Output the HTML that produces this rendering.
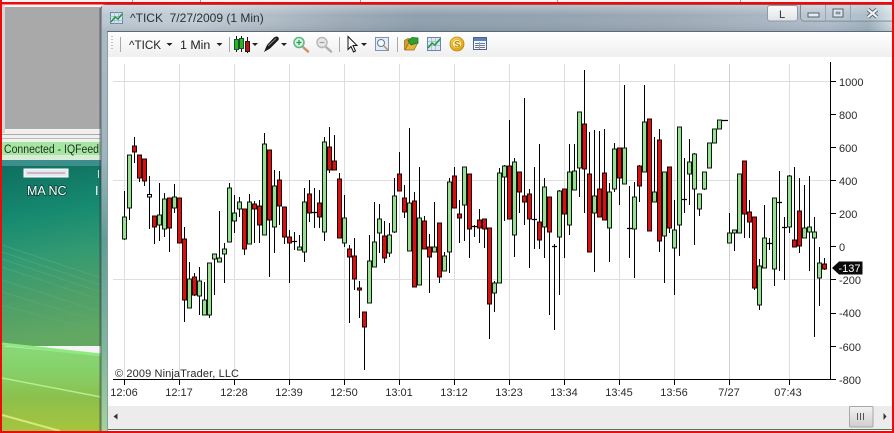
<!DOCTYPE html>
<html><head><meta charset="utf-8"><title>^TICK</title>
<style>
html,body{margin:0;padding:0;background:#fff;width:894px;height:433px;overflow:hidden}
svg{display:block;font-family:"Liberation Sans",Arial,sans-serif}
</style></head><body>
<svg width="894" height="433" viewBox="0 0 894 433" xmlns="http://www.w3.org/2000/svg">
<defs>
<linearGradient id="desk" x1="0" y1="0" x2="0.1" y2="1">
<stop offset="0" stop-color="#0f6e60"/><stop offset=".3" stop-color="#168a70"/><stop offset=".55" stop-color="#349a72"/><stop offset=".75" stop-color="#4c9e68"/><stop offset="1" stop-color="#62a862"/></linearGradient>
<linearGradient id="desk2" x1="0" y1="0" x2="0" y2="1">
<stop offset="0" stop-color="#88d878"/><stop offset=".3" stop-color="#86d068"/><stop offset=".6" stop-color="#8cc04c"/><stop offset="1" stop-color="#a8c43c"/></linearGradient>
<linearGradient id="title" x1="0" y1="0" x2="1" y2="0">
<stop offset="0" stop-color="#bcc8d1"/><stop offset=".12" stop-color="#c2cdd5"/><stop offset=".3" stop-color="#9eacb8"/><stop offset=".4" stop-color="#8f9fad"/><stop offset=".6" stop-color="#95a4b1"/><stop offset=".72" stop-color="#9daab6"/><stop offset=".92" stop-color="#b0becb"/><stop offset=".97" stop-color="#9fb2bf"/><stop offset="1" stop-color="#d0dde4"/></linearGradient>
<linearGradient id="tshade" x1="0" y1="0" x2="0" y2="1">
<stop offset="0" stop-color="#fff" stop-opacity=".32"/><stop offset=".4" stop-color="#fff" stop-opacity="0"/><stop offset="1" stop-color="#556" stop-opacity=".14"/></linearGradient>
<linearGradient id="tool" x1="0" y1="0" x2="0" y2="1">
<stop offset="0" stop-color="#ffffff"/><stop offset="1" stop-color="#efefef"/></linearGradient>
<linearGradient id="side" x1="0" y1="0" x2="0" y2="1">
<stop offset="0" stop-color="#aebbc5"/><stop offset=".35" stop-color="#a0b6be"/><stop offset=".55" stop-color="#5f9f95"/><stop offset=".8" stop-color="#7fb89a"/><stop offset="1" stop-color="#a4d49a"/></linearGradient>
<linearGradient id="thumb" x1="0" y1="0" x2="0" y2="1">
<stop offset="0" stop-color="#f2f2f2"/><stop offset="1" stop-color="#cfcfcf"/></linearGradient>
<linearGradient id="btn" x1="0" y1="0" x2="0" y2="1">
<stop offset="0" stop-color="#fbfbfb"/><stop offset="1" stop-color="#e0e4e8"/></linearGradient>
<radialGradient id="coin" cx=".4" cy=".35" r=".7"><stop offset="0" stop-color="#ffe27a"/><stop offset="1" stop-color="#dc9c08"/></radialGradient>
</defs>

<!-- background / left app -->
<rect width="894" height="433" fill="#f4f4f4"/>
<rect x="2" y="130" width="100" height="12" fill="#f0f0ee"/>
<rect x="5" y="7" width="97" height="122" fill="#a9a9a9"/>
<rect x="2" y="5" width="3" height="128" fill="#d8d8d8"/>
<rect x="2" y="134" width="100" height="1" fill="#aaa"/>
<rect x="2" y="138" width="100" height="1" fill="#bbb"/>
<rect x="2" y="142" width="100" height="13" fill="#a6e6a2"/>
<rect x="2" y="155" width="100" height="5" fill="#d8ecd6"/>
<rect x="2" y="160" width="100" height="6" fill="#3c8f8c"/>
<rect x="2" y="166" width="100" height="180" fill="url(#desk)"/>
<path d="M2 346L101 356V433H2Z" fill="url(#desk2)"/>
<g fill="none">
<path d="M2 344L101 355" stroke-width="3" stroke="#8eea80"/>
<path d="M2 378L101 397" stroke-width="1.500" stroke="#b4ec90"/>
<path d="M2 415L60 431" stroke-width="2" stroke="#d4e87c"/>
</g>
<g stroke="#58ae8c" stroke-opacity=".5" fill="none">
<path d="M2 245L101 278M2 252L101 285M2 259L101 292M2 267L101 300M2 280L101 312M2 292L101 322M2 305L101 332"/>
</g>
<text x="4" y="153" font-size="11.500" fill="#223322" textLength="95" lengthAdjust="spacingAndGlyphs">Connected - IQFeed</text>
<rect x="24" y="169" width="44" height="8" fill="#e8e8ec" stroke="#fff"/>
<rect x="27" y="172" width="38" height="2" fill="#c8b8c8"/>
<text x="27" y="195" font-size="12.500" fill="#000" fill-opacity=".5" stroke="#000" stroke-opacity=".35" stroke-width="2">MA NC</text>
<text x="27" y="195" font-size="12.500" fill="#fff">MA NC</text>
<text x="95" y="195" font-size="12.500" fill="#fff">I</text>
<rect x="98" y="170" width="1" height="8" fill="#ddd"/>

<!-- window frame -->
<rect x="99" y="8" width="2" height="425" fill="#223" fill-opacity=".25"/>
<path d="M101 433V10Q101 5 106 5H892V433Z" fill="url(#side)"/>
<path d="M101 433V10Q101 5 106 5H892" fill="none" stroke="#445" stroke-opacity=".7"/>
<rect x="102" y="5" width="790" height="26" fill="url(#title)"/>
<rect x="102" y="5" width="790" height="26" fill="url(#tshade)"/>
<rect x="107" y="31" width="785" height="1" fill="#5a6a76"/>
<rect x="107" y="32" width="785" height="399" fill="#fff"/>
<rect x="107" y="32" width="785" height="25" fill="url(#tool)"/>
<rect x="107" y="32" width="1" height="399" fill="#8a9ca4"/>

<!-- title icon -->
<g>
<rect x="110.500" y="12.500" width="12" height="11" fill="#d8e4f0" stroke="#6a86a8"/>
<path d="M114.500 12v12M118.500 12v12M110 16.500h13M110 20.500h13" stroke="#9fb4c8" stroke-width=".7"/>
<path d="M111 22L115 17L118 19L122 14" stroke="#1e9a3c" stroke-width="1.500" fill="none"/>
</g>
<text x="130" y="22" font-size="12" fill="#2a3038" xml:space="preserve">^TICK  7/27/2009 (1 Min)</text>

<!-- caption buttons -->
<rect x="767.500" y="5.500" width="30" height="15.500" rx="2.500" fill="url(#btn)" stroke="#8f9aa2"/>
<text x="779" y="18" font-size="11" fill="#333">L</text>
<path d="M800.500 5V17Q800.500 21 804 21H892" fill="none" stroke="#75858f"/>
<path d="M825.500 5V21M850.500 5V21" stroke="#8a99a3"/>
<rect x="800.500" y="5" width="91" height="16" fill="#fff" fill-opacity=".14"/>
<rect x="808" y="13" width="11" height="4" fill="#e8ecef" stroke="#55626c"/>
<rect x="833" y="9" width="10" height="8" fill="#dfe5ea" stroke="#55626c"/>
<rect x="836" y="12" width="4" height="2" fill="#9fadb9" stroke="#55626c" stroke-width=".5"/>
<path d="M868 9.500L877 17M877 9.500L868 17" stroke="#4e5b66" stroke-width="4"/>
<path d="M868 9.500L877 17M877 9.500L868 17" stroke="#eef1f3" stroke-width="2.200"/>

<!-- toolbar -->
<path d="M112 36v1M112 39v1M112 42v1M112 45v1M112 48v1" stroke="#a0a0a0" stroke-width="1.200"/>
<path d="M120.500 37V52M229.500 37V52M339.500 37V52M397.500 37V52" stroke="#a8a8a8"/>
<g font-size="12.400" fill="#222"><text x="129" y="49" textLength="32" lengthAdjust="spacingAndGlyphs">^TICK</text><text x="180" y="49">1 Min</text></g>
<g fill="#222"><path d="M166.500 43h6l-3 3zM216.500 43h6l-3 3zM252 43h6l-3 3zM281 43h6l-3 3zM361 43h6l-3 3z"/></g>
<!-- candle icon -->
<path d="M236.500 36V52M241.500 36V52M247.500 37V53" stroke="#111"/>
<rect x="234.500" y="39.500" width="4" height="10" fill="#33b020" stroke="#153"/>
<rect x="239.500" y="38.500" width="4" height="10" fill="#33b020" stroke="#153"/>
<rect x="245.500" y="41.500" width="4" height="10" fill="#b01818" stroke="#311"/>
<!-- pen icon -->
<path d="M264 52L267 45L274 37.500Q277 35.500 278.500 37.500Q279.500 39.500 277.500 41L270 48.500Z" fill="#1a1a1a"/>
<path d="M268 46L276 38.500" stroke="#aaa" stroke-width=".8"/>
<!-- zoom in -->
<path d="M303.500 47.500L308 51.500" stroke="#d4905c" stroke-width="2.500" stroke-linecap="round"/>
<circle cx="299" cy="42.500" r="5" fill="#d8f4e0" stroke="#58b888" stroke-width="1.500"/>
<path d="M296.500 42.500h5M299 40v5" stroke="#2a9a40" stroke-width="1.200"/>
<!-- zoom out -->
<path d="M326.500 47.500L331 51.500" stroke="#b0b0b0" stroke-width="2.500" stroke-linecap="round"/>
<circle cx="322" cy="42.500" r="5" fill="#e8e8e8" stroke="#b8b8b8" stroke-width="1.500"/>
<path d="M319.500 42.500h5" stroke="#a0a0a0" stroke-width="1.200"/>
<!-- cursor -->
<path d="M348 36.500V49.500L351 46.500L353.500 52L355.500 51L353 45.500H357Z" fill="#fff" stroke="#111"/>
<!-- zoom-box icon -->
<rect x="375.500" y="37.500" width="13" height="13" fill="#e4ecf6" stroke="#7e94b4"/>
<circle cx="381" cy="43" r="3.500" fill="#f6f8fb" stroke="#607a98"/>
<path d="M384 46L388 50" stroke="#d08850" stroke-width="1.500"/>
<!-- folder icon -->
<path d="M404.500 49.500V40.500L408 38.500L412 39.500V47Z" fill="#d69a28" stroke="#90681a" stroke-width=".7"/>
<path d="M405 50L409 42.500H418L414 50Z" fill="#e8b440" stroke="#90681a" stroke-width=".7"/>
<path d="M408 40.500L412 37.500L418 38V43L411 45Z" fill="#2fa030" stroke="#1c7020" stroke-width=".7"/>
<!-- chart icon -->
<rect x="427.500" y="37.500" width="13" height="13" fill="#dfe8f2" stroke="#6a86a8"/>
<path d="M431.500 38v12M435.500 38v12M428 41.500h12M428 45.500h12" stroke="#9fb4c8" stroke-width=".7"/>
<path d="M428 48L432 43L435 45L440 39" stroke="#1e9a3c" stroke-width="1.500" fill="none"/>
<!-- coin icon -->
<circle cx="457" cy="44" r="7" fill="url(#coin)" stroke="#c08a08" stroke-width=".8"/>
<circle cx="457" cy="44" r="4.500" fill="#fff2b0" stroke="#d49a10" stroke-width=".6"/>
<text x="454.200" y="47.500" font-size="9" font-weight="bold" fill="#c08000">S</text>
<!-- table icon -->
<rect x="473.500" y="37.500" width="13" height="12" fill="#f4f6fa" stroke="#50648a"/>
<rect x="474" y="38" width="12" height="3" fill="#5a80c0"/>
<path d="M475 43.500h10M475 45.500h10M475 47.500h10" stroke="#6a7890"/><path d="M479.500 42v7" stroke="#9aa"/>

<!-- grid -->
<g stroke="#dedede" fill="none">
<path d="M113 81.500H830M113 180.500H830M113 279.500H830"/>
<path d="M124.500 64V379M179.500 64V379M234.500 64V379M289.500 64V379M344.500 64V379M399.500 64V379M454.500 64V379M509.500 64V379M564.500 64V379M619.500 64V379M674.500 64V379M789.500 64V379"/>
<path d="M729.500 64V379" stroke="#cfcfcf"/>
</g>

<!-- wicks -->
<path stroke="#000" fill="none" stroke-width="1" d="M124.500 191V240M129.500 155V220M134.500 137V163M139.500 155V182M144.500 159V186M149.500 176V229M154.500 216V244M159.500 183V241M164.500 193V237M169.500 198V252M174.500 184V213M179.500 198V243M184.500 227V322M189.500 262V308M194.500 273V296M199.500 267V315M204.500 282V315M209.500 263V318M214.500 254V295M219.500 211V262M224.500 243V283M229.500 183V242M234.500 195V233M239.500 197V217M244.500 209V255M249.500 194V244M254.500 201V243M259.500 200V243M264.500 133V235M269.500 150V277M274.500 170V253M279.500 171V225M284.500 207V244M289.500 230V283M294.500 232V250M299.500 235V250M304.500 188V262M309.500 180V222M314.500 188V228M319.500 190V228M324.500 137V241M329.500 127V173M334.500 135V170M339.500 173V238M344.500 195V247M349.500 245V323M354.500 238V290M359.500 281V318M364.500 312V370M369.500 235V303M374.500 202V267M379.500 204V253M384.500 221V263M389.500 223V257M394.500 178V233M399.500 152V191M404.500 185V218M409.500 128V251M414.500 192V287M419.500 167V285M424.500 216V249M429.500 234V293M434.500 202V252M439.500 223V283M444.500 252V271M449.500 178V273M454.500 167V208M459.500 200V243M464.500 167V241M469.500 174V258M474.500 225V237M479.500 209V243M484.500 219V248M489.500 228V339M494.500 281V312M499.500 168V283M504.500 165V221M509.500 120V219M514.500 158V257M519.500 172V213M524.500 98V225M529.500 189V268M534.500 167V249M539.500 144V249M544.500 178V258M549.500 197V315M554.500 244V330M559.500 190V295M564.500 189V258M569.500 144V235M574.500 144V190M579.500 112V197M584.500 70V213M589.500 132V252M594.500 130V272M599.500 131V217M604.500 129V220M609.500 183V262M614.500 143V192M619.500 148V205M624.500 85V184M629.500 186V258M634.500 182V278M639.500 165V202M644.500 85V172M649.500 119V231M654.500 137V202M659.500 129V252M664.500 172V283M669.500 167V233M674.500 200V295M679.500 127V256M684.500 158V213M689.500 139V205M694.500 153V245M699.500 194V216M704.500 172V190M729.500 213V243M734.500 230V251M739.500 174V233M744.500 161V238M749.500 200V238M754.500 217V290M759.500 259V310M764.500 205V268M769.500 238V250M774.500 198V286M779.500 171V271M784.500 217V280M789.500 175V233M794.500 167V247M799.500 178V253M804.500 185V238M809.500 176V271M814.500 217V337M819.500 247V306M824.500 258V270"/>

<!-- dojis -->
<path stroke="#000" fill="none" stroke-width="1.200" d="M292 241.500h5M312 212.500h5M472 226.500h5M532 219.500h5M552 246.500h5M627 228.500h5M682 199.500h5M722 120.500h6M767 243.500h5M777 202.500h5M782 227.500h5"/>
<rect x="147.500" y="194.500" width="4" height="2.500" fill="#e8f0e8" stroke="#000"/>

<!-- green bodies -->
<path fill="#9ade96" stroke="#0c1c0c" stroke-width="1" d="M122.500 217h4v22h-4zM127.500 155h4v53h-4zM157.500 215h4v10h-4zM162.500 199h4v30h-4zM172.500 197h4v11h-4zM187.500 279h4v29h-4zM197.500 281h4v15h-4zM202.500 300h4v15h-4zM207.500 263h4v52h-4zM212.500 254h4v5h-4zM217.500 258h4v4h-4zM222.500 249h4v5h-4zM227.500 188h4v54h-4zM232.500 213h4v8h-4zM237.500 202h4v7h-4zM247.500 202h4v42h-4zM262.500 144h4v91h-4zM272.500 186h4v41h-4zM297.500 247h4v3h-4zM302.500 202h4v50h-4zM322.500 142h4v90h-4zM342.500 218h4v25h-4zM367.500 261h4v42h-4zM372.500 242h4v25h-4zM377.500 219h4v14h-4zM387.500 235h4v18h-4zM392.500 196h4v36h-4zM407.500 203h4v48h-4zM417.500 218h4v67h-4zM432.500 247h4v5h-4zM442.500 256h4v15h-4zM447.500 182h4v70h-4zM462.500 167h4v38h-4zM492.500 283h4v10h-4zM497.500 173h4v110h-4zM502.500 166h4v11h-4zM512.500 162h4v73h-4zM542.500 187h4v40h-4zM557.500 191h4v46h-4zM567.500 172h4v53h-4zM572.500 171h4v19h-4zM577.500 112h4v56h-4zM592.500 196h4v17h-4zM607.500 192h4v36h-4zM612.500 149h4v40h-4zM622.500 148h4v36h-4zM632.500 197h4v32h-4zM642.500 122h4v50h-4zM652.500 192h4v10h-4zM662.500 172h4v64h-4zM672.500 230h4v18h-4zM677.500 127h4v98h-4zM687.500 162h4v12h-4zM692.500 154h4v35h-4zM697.500 194h4v15h-4zM702.500 172h4v17h-4zM707.500 143h4v25h-4zM712.500 129h4v14h-4zM717.500 120h4v9h-4zM727.500 233h4v10h-4zM732.500 230h4v3h-4zM737.500 174h4v59h-4zM757.500 266h4v39h-4zM762.500 238h4v30h-4zM772.500 198h4v71h-4zM787.500 176h4v51h-4zM802.500 228h4v10h-4zM807.500 227h4v5h-4zM812.500 232h4v6h-4zM817.500 263h4v15h-4z"/>

<!-- red bodies -->
<path fill="#d81010" stroke="#1a0606" stroke-width="1" d="M132.500 146h4v6h-4zM137.500 155h4v23h-4zM142.500 159h4v22h-4zM152.500 216h4v11h-4zM167.500 198h4v30h-4zM177.500 198h4v45h-4zM182.500 239h4v61h-4zM192.500 277h4v18h-4zM242.500 209h4v40h-4zM252.500 204h4v5h-4zM257.500 206h4v19h-4zM267.500 150h4v70h-4zM277.500 180h4v26h-4zM282.500 207h4v30h-4zM287.500 237h4v6h-4zM307.500 194h4v19h-4zM317.500 203h4v14h-4zM327.500 147h4v23h-4zM332.500 161h4v9h-4zM337.500 179h4v59h-4zM347.500 249h4v8h-4zM352.500 256h4v23h-4zM357.500 288h4v2h-4zM362.500 312h4v15h-4zM382.500 236h4v22h-4zM397.500 174h4v17h-4zM402.500 198h4v14h-4zM412.500 201h4v86h-4zM422.500 221h4v28h-4zM427.500 247h4v10h-4zM437.500 223h4v54h-4zM452.500 176h4v32h-4zM457.500 214h4v4h-4zM467.500 174h4v55h-4zM477.500 220h4v8h-4zM482.500 219h4v10h-4zM487.500 228h4v76h-4zM507.500 166h4v53h-4zM517.500 172h4v20h-4zM522.500 196h4v6h-4zM527.500 194h4v25h-4zM537.500 222h4v18h-4zM547.500 197h4v35h-4zM562.500 189h4v25h-4zM582.500 124h4v45h-4zM587.500 174h4v78h-4zM597.500 189h4v28h-4zM602.500 173h4v47h-4zM617.500 148h4v30h-4zM637.500 166h4v20h-4zM647.500 119h4v112h-4zM657.500 140h4v101h-4zM667.500 167h4v61h-4zM742.500 161h4v53h-4zM747.500 212h4v10h-4zM752.500 217h4v71h-4zM792.500 240h4v7h-4zM797.500 211h4v35h-4zM822.500 264h4v5h-4z"/>

<!-- axes -->
<path stroke="#000" fill="none" d="M830.500 62V379.500M113 379.500H831"/>
<path stroke="#000" fill="none" d="M124.500 379V385M179.500 379V385M234.500 379V385M289.500 379V385M344.500 379V385M399.500 379V385M454.500 379V385M509.500 379V385M564.500 379V385M619.500 379V385M674.500 379V385M729.500 379V385M789.500 379V385"/>
<path stroke="#000" fill="none" d="M830 81.500h6M830 114.500h6M830 147.500h6M830 180.500h6M830 213.500h6M830 246.500h6M830 279.500h6M830 313.500h6M830 346.500h6M830 379.500h6"/>

<g font-size="11" fill="#2a2a2a">
<text x="839" y="86">1000</text><text x="839" y="119">800</text><text x="839" y="152">600</text><text x="839" y="185">400</text><text x="839" y="218">200</text><text x="839" y="251">0</text><text x="839" y="284">-200</text><text x="839" y="317">-400</text><text x="839" y="351">-600</text><text x="839" y="384">-800</text>
<g text-anchor="middle">
<text x="124" y="396">12:06</text><text x="179" y="396">12:17</text><text x="234" y="396">12:28</text><text x="289" y="396">12:39</text><text x="344" y="396">12:50</text><text x="399" y="396">13:01</text><text x="454" y="396">13:12</text><text x="509" y="396">13:23</text><text x="564" y="396">13:34</text><text x="619" y="396">13:45</text><text x="674" y="396">13:56</text><text x="729" y="396">7/27</text><text x="788" y="396">07:43</text>
</g>
<text x="115" y="377" textLength="124" lengthAdjust="spacing">© 2009 NinjaTrader, LLC</text>
</g>

<!-- price marker -->
<path d="M832 268L839 261.500H862.500V274.500H839Z" fill="#0a0a0a"/>
<text x="838.500" y="272" font-size="11" fill="#fff">-137</text>

<!-- scrollbar -->
<rect x="108" y="406" width="784" height="23" fill="#ececec"/>
<rect x="108" y="429" width="784" height="1" fill="#4e7a6a"/>
<path d="M113.500 416.500l4-3v6z" fill="#333"/>
<path d="M886.500 416.500l-3-3.500v7z" fill="#333"/>
<rect x="849.500" y="406.500" width="23.500" height="20.500" rx="1" fill="url(#thumb)" stroke="#a8a8a8"/>
<path d="M857.500 413v7M860.500 413v7M863.500 413v7" stroke="#555"/>

<!-- red outline -->
<rect x="0" y="0" width="894" height="2" fill="#f4f4f4"/>
<path d="M132.500 0v2M200.500 0v2M360.500 0v2M557.500 0v2M740.500 0v2" stroke="#999"/>
<rect x="0" y="2" width="894" height="2.500" fill="#ee0a0a"/>
<rect x="0" y="0" width="2" height="433" fill="#ee0a0a"/>
<rect x="892" y="0" width="2" height="433" fill="#ee0a0a"/>
<rect x="0" y="431" width="894" height="2" fill="#ee0a0a"/>
</svg>
</body></html>
